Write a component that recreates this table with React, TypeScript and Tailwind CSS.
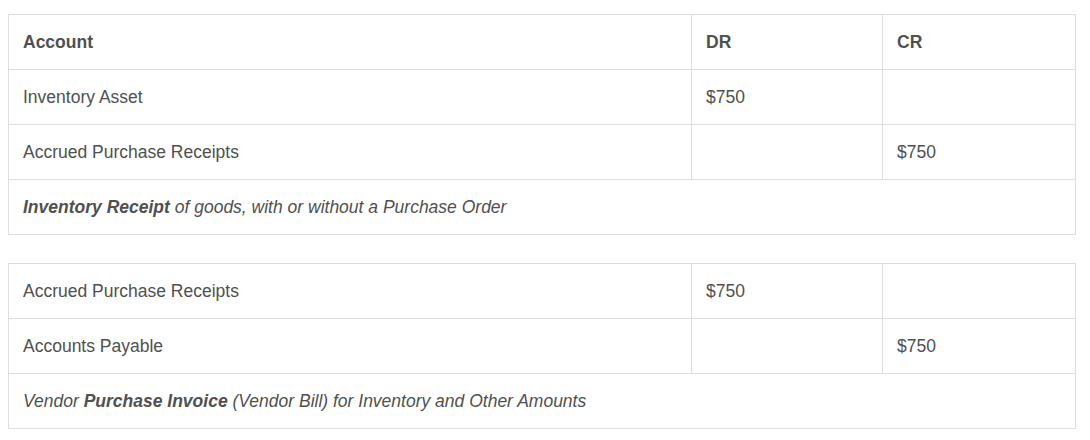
import React from "react";

type Row = { account: string; dr?: string; cr?: string };

const cell = "border border-[#dddddd] px-[14px] py-[15px] leading-[24px] align-middle";

const Ledger = ({
    header,
    rows,
    note,
}: {
    header?: boolean;
    rows: Row[];
    note: React.ReactNode;
}) => {
    return (
        <table className="w-[1067px] table-fixed border-collapse">
            <colgroup>
                <col className="w-[683px]" />
                <col className="w-[191px]" />
                <col className="w-[193px]" />
            </colgroup>
            <tbody>
                {header && (
                    <tr>
                        <th className={`${cell} text-left font-bold`}>Account</th>
                        <th className={`${cell} text-left font-bold`}>DR</th>
                        <th className={`${cell} text-left font-bold`}>CR</th>
                    </tr>
                )}
                {rows.map((r) => (
                    <tr key={r.account}>
                        <td className={cell}>{r.account}</td>
                        <td className={cell}>{r.dr}</td>
                        <td className={cell}>{r.cr}</td>
                    </tr>
                ))}
                <tr>
                    <td colSpan={3} className={`${cell} italic`}>
                        {note}
                    </td>
                </tr>
            </tbody>
        </table>
    );
};

const App = () => {
    return (
        <div className="min-h-[440px] bg-white pt-[14px] pl-[8px] text-[17.5px] text-[#505050] font-['Liberation_Sans',Arial,sans-serif]">
            {/* Receipt */}
            <Ledger
                header
                rows={[
                    { account: "Inventory Asset", dr: "$750" },
                    { account: "Accrued Purchase Receipts", cr: "$750" },
                ]}
                note={
                    <>
                        <b>Inventory Receipt</b> of goods, with or without a Purchase Order
                    </>
                }
            />

            {/* Vendor bill */}
            <div className="mt-[28px]">
                <Ledger
                    rows={[
                        { account: "Accrued Purchase Receipts", dr: "$750" },
                        { account: "Accounts Payable", cr: "$750" },
                    ]}
                    note={
                        <>
                            Vendor <b>Purchase Invoice</b> (Vendor Bill) for Inventory and Other Amounts
                        </>
                    }
                />
            </div>
        </div>
    );
};

export default App;
